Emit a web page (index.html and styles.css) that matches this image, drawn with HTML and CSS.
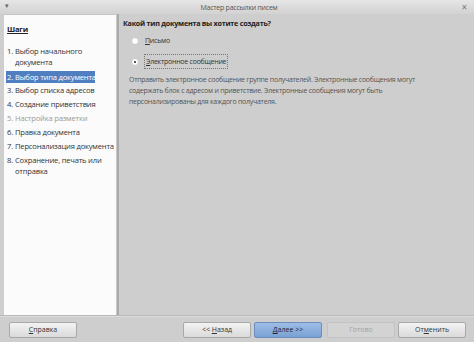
FILE: index.html
```html
<!doctype html>
<html lang="ru">
<head>
<meta charset="utf-8" />
<title>Мастер рассылки писем</title>
<link rel="stylesheet" href="styles.css">
</head>
<body>
  <div class="window">
    <!-- заголовок окна -->
    <div class="titlebar">
      <span class="menu-arrow">▾</span>
      <span class="title">Мастер рассылки писем</span>
      <span class="close">×</span>
    </div>

    <div class="main">
      <!-- шаги мастера -->
      <div class="steps">
        <div class="steps-head">Шаги</div>
        <ol class="step-list">
          <li><span class="num">1.</span><span>Выбор начального документа</span></li>
          <li class="active"><span class="num">2.</span><span>Выбор типа документа</span></li>
          <li><span class="num">3.</span><span>Выбор списка адресов</span></li>
          <li><span class="num">4.</span><span>Создание приветствия</span></li>
          <li class="disabled"><span class="num">5.</span><span>Настройка разметки</span></li>
          <li><span class="num">6.</span><span>Правка документа</span></li>
          <li><span class="num">7.</span><span>Персонализация документа</span></li>
          <li><span class="num">8.</span><span>Сохранение, печать или отправка</span></li>
        </ol>
      </div>
      <div class="divider"></div>

      <!-- содержимое шага -->
      <div class="content">
        <div class="question">Какой тип документа вы хотите создать?</div>
        <div class="options">
          <label class="radio"><span class="dot"></span><span class="label"><u>П</u>исьмо</span></label>
          <label class="radio checked"><span class="dot"></span><span class="label focus"><u>Э</u>лектронное сообщение</span></label>
        </div>
        <p class="desc">Отправить электронное сообщение группе получателей. Электронные сообщения могут содержать блок с адресом и приветствие. Электронные сообщения могут быть персонализированы для каждого получателя.</p>
      </div>
    </div>

    <!-- кнопки -->
    <div class="footer">
      <button class="btn"><u>С</u>правка</button>
      <div class="spacer"></div>
      <button class="btn">&lt;&lt; <u>Н</u>азад</button>
      <button class="btn primary"><u>Д</u>алее &gt;&gt;</button>
      <button class="btn off">Готово</button>
      <button class="btn">От<u>м</u>енить</button>
    </div>
  </div>
</body>
</html>
```

FILE: styles.css
```css
*{margin:0;padding:0;box-sizing:border-box}
body{
  width:474px;height:342px;overflow:hidden;
  background:#cecece;
  font-family:"Open Sans","Noto Sans",sans-serif;
  font-size:7px;letter-spacing:-0.25px;color:#333;
}

.window{width:474px;height:342px;display:flex;flex-direction:column}

/* === заголовок === */
.titlebar{
  height:14px;display:flex;align-items:center;position:relative;
  background:linear-gradient(#e6e6e6,#d2d2d2);
  color:#555;
}
.menu-arrow{position:absolute;left:5px;top:1px;font-size:7px;color:#666}
.title{flex:1;text-align:center;padding-left:4px}
.close{position:absolute;right:7px;top:0;font-size:10px;color:#777}

/* === основная часть === */
.main{flex:1;display:flex;padding-left:4px;border-bottom:1px solid #b9b9b9}
.steps{
  width:112px;background:#fbfbfb;
  border-top:1px solid #c4c4c4;
  padding:8px 0 0 2px;
  font-size:7.6px;letter-spacing:-0.2px;
}
.steps-head{
  font-weight:bold;color:#222;text-decoration:underline;
  padding-left:1px;line-height:12px;
}
.step-list{list-style:none;margin-top:11px}
.step-list li{display:flex;line-height:11px;margin-bottom:3px;color:#333;padding-left:1px}
.step-list li .num{width:8px;flex:none}
.step-list li.active{
  background:#4f7fc0;color:#fff;width:89px;line-height:12px;margin-bottom:2px;
  white-space:nowrap;
}
.step-list li.disabled{color:#9a9a9a}

.divider{width:3px;background:#a9a9a9;border-left:1px solid #c8c8c8}

.content{flex:1;padding:3px 8px 0 4px}
.question{font-weight:bold;color:#222;line-height:12px;font-size:7.2px}
.options{display:flex;flex-direction:column;gap:8px;margin:5px 0 0 8px}
.radio{display:flex;align-items:center;gap:5px;height:13px}
.dot{
  width:8px;height:8px;border-radius:50%;
  background:#fff;border:1px solid #c8c8c8;position:relative;
}
.radio.checked .dot::after{
  content:"";position:absolute;left:2px;top:2px;
  width:2px;height:2px;border-radius:50%;background:#222;
}
.label{color:#333;line-height:11px;padding:1px 1px}
.label.focus{border:1px dotted #777}
.desc{margin:6px 0 0 6px;color:#555;line-height:11px;width:320px}

/* === кнопки === */
.footer{height:26px;display:flex;align-items:center;gap:3px;padding:0 8px 0 9px;border-top:1px solid #dcdcdc}
.spacer{flex:1}
.btn{
  font:inherit;height:16px;width:68px;
  border:1px solid #a9a9a9;border-radius:2px;color:#333;
  background:linear-gradient(#f3f3f3,#dadada);
}
.btn.primary{background:linear-gradient(#9dbde6,#7aa1d3);border-color:#6a8fbf;color:#223}
.btn.off{background:#d3d3d3;border-color:#c3c3c3;color:#a3a3a3;margin-left:2px}
```
